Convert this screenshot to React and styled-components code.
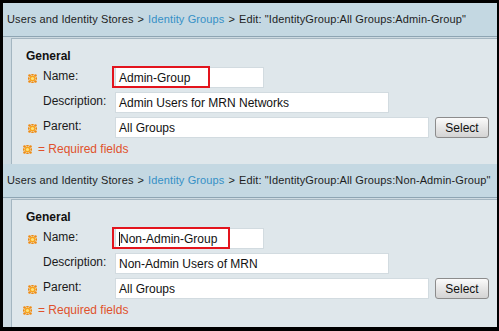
import React from "react";
import styled, { createGlobalStyle } from "styled-components";

const GlobalStyle = createGlobalStyle`
  html, body {
    margin: 0;
    padding: 0;
    background: #000;
  }
  body {
    font-family: "Liberation Sans", Arial, sans-serif;
    font-size: 12px;
    color: #1a1a1a;
  }
`;

const sections = [
  {
    name: "Admin-Group",
    description: "Admin Users for MRN Networks",
    highlight: 98,
    height: 161,
    caret: false,
  },
  {
    name: "Non-Admin-Group",
    description: "Non-Admin Users of MRN",
    highlight: 118,
    height: 163,
    caret: true,
  },
];

export default function App() {
  return (
    <>
      <GlobalStyle />
      <Frame>
        {sections.map((s) => (
          <Section key={s.name} $height={s.height}>
            <Crumbs>
              <span>Users and Identity Stores</span>
              <Sep>&gt;</Sep>
              <CrumbLink>Identity Groups</CrumbLink>
              <Sep>&gt;</Sep>
              <span>Edit: "IdentityGroup:All Groups:{s.name}"</span>
            </Crumbs>
            <Body>
              <Panel>
                <Heading>General</Heading>
                <Row>
                  <StarSlot>
                    <Star />
                  </StarSlot>
                  <Label>Name:</Label>
                  <Marked>
                    <Field $width={149}>
                      {s.caret && <Caret />}
                      {s.name}
                    </Field>
                    <Highlight $width={s.highlight} />
                  </Marked>
                </Row>
                <Row>
                  <StarSlot />
                  <Label>Description:</Label>
                  <Field $width={274}>{s.description}</Field>
                </Row>
                <Row>
                  <StarSlot>
                    <Star />
                  </StarSlot>
                  <Label>Parent:</Label>
                  <Field $width={314}>All Groups</Field>
                  <Button>Select</Button>
                </Row>
                <Required>
                  <Star />
                  <span>= Required fields</span>
                </Required>
              </Panel>
            </Body>
          </Section>
        ))}
      </Frame>
    </>
  );
}

function Star() {
  const rays = [];
  for (let i = 0; i < 8; i++) {
    const a = (i * Math.PI) / 4;
    const x = 4.5 + Math.cos(a) * 4.2;
    const y = 4.5 + Math.sin(a) * 4.2;
    rays.push(<circle key={i} cx={x} cy={y} r="1.3" fill="#f08a12" />);
  }
  return (
    <StarIcon width="9" height="9" viewBox="0 0 9 9">
      {rays}
      <circle cx="4.5" cy="4.5" r="3" fill="#f7a21c" />
      <circle cx="4.5" cy="4.5" r="1.6" fill="#ffe27a" />
    </StarIcon>
  );
}

const Frame = styled.div`
  box-sizing: border-box;
  width: 499px;
  height: 331px;
  border-style: solid;
  border-color: #000;
  border-width: 3px 2px 4px 3px;
  display: flex;
  flex-direction: column;
  overflow: hidden;
  background: #cfdce3;
`;

const Section = styled.section`
  height: ${(p) => p.$height}px;
  flex: none;
  display: flex;
  flex-direction: column;
  overflow: hidden;
`;

const Crumbs = styled.div`
  box-sizing: border-box;
  height: 34px;
  flex: none;
  display: flex;
  align-items: center;
  padding: 0 0 1px 4px;
  background: #c4d8e2;
  border-bottom: 1px solid #8ea5b3;
  color: #1e1e1e;
  font-size: 11px;
  letter-spacing: 0.12px;
  white-space: nowrap;
`;

const Sep = styled.span`
  margin: 0 4px;
`;

const CrumbLink = styled.span`
  color: #3590c6;
`;

const Body = styled.div`
  flex: 1;
  display: flex;
  padding: 1px 0 0 8px;
  background: #cddae1;
  min-height: 0;
`;

const Panel = styled.div`
  flex: 1;
  box-sizing: border-box;
  background: #dfe7eb;
  border-top: 1px solid #a4b6c1;
  border-left: 1px solid #a4b6c1;
  padding: 10px 0 0 14px;
  display: flex;
  flex-direction: column;
  gap: 4px;
`;

const Heading = styled.div`
  font-weight: bold;
  line-height: 14px;
  color: #111;
`;

const Row = styled.div`
  display: flex;
  align-items: flex-start;
  height: 21px;
`;

const StarSlot = styled.div`
  width: 17px;
  flex: none;
  padding: 7px 0 0 2px;
  box-sizing: border-box;
  height: 21px;
`;

const StarIcon = styled.svg`
  display: block;
`;

const Label = styled.div`
  width: 72px;
  flex: none;
  padding-top: 2px;
  line-height: 14px;
  color: #1a1a1a;
`;

const Marked = styled.div`
  position: relative;
`;

const Field = styled.div`
  box-sizing: border-box;
  width: ${(p) => p.$width}px;
  height: 21px;
  background: #fff;
  border: 1px solid #d2dbe0;
  padding: 0 3px;
  display: flex;
  align-items: center;
  color: #111;
  white-space: nowrap;
`;

const Caret = styled.i`
  display: inline-block;
  width: 1px;
  height: 14px;
  background: #111;
`;

const Highlight = styled.div`
  position: absolute;
  left: -3px;
  top: -1px;
  width: ${(p) => p.$width}px;
  height: 22px;
  box-sizing: border-box;
  border: 2px solid #e3141d;
  pointer-events: none;
`;

const Button = styled.div`
  box-sizing: border-box;
  margin-left: 6px;
  width: 54px;
  height: 21px;
  border: 1px solid #8c8c8c;
  border-radius: 3px;
  background: linear-gradient(#fbfbfb, #e4e4e4 55%, #d4d4d4);
  display: flex;
  align-items: center;
  justify-content: center;
  color: #111;
`;

const Required = styled.div`
  display: flex;
  align-items: center;
  gap: 6px;
  margin: 0 0 0 -3px;
  line-height: 14px;
  color: #e0522c;
`;
